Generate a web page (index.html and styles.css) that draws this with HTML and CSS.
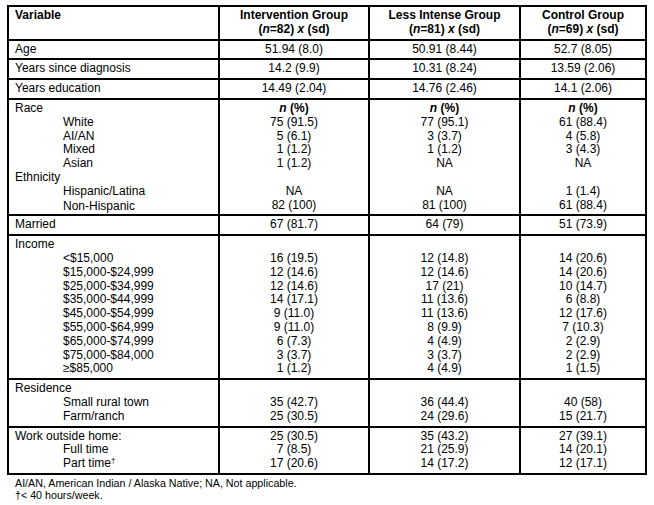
FILE: index.html
```html
<!DOCTYPE html>
<html>
<head>
<meta charset="utf-8">
<link rel="stylesheet" href="styles.css">
</head>
<body>
<table class="data">
  <colgroup>
    <col class="c1"><col class="c2"><col class="c3"><col class="c4">
  </colgroup>
  <thead>
    <tr>
      <th class="lbl">Variable</th>
      <th>Intervention Group<br>(<i>n</i>=82) <i>x</i> (sd)</th>
      <th>Less Intense Group<br>(<i>n</i>=81) <i>x</i> (sd)</th>
      <th>Control Group<br>(<i>n</i>=69) <i>x</i> (sd)</th>
    </tr>
  </thead>
  <tbody>
    <tr><td class="lbl">Age</td><td>51.94 (8.0)</td><td>50.91 (8.44)</td><td>52.7 (8.05)</td></tr>
    <tr><td class="lbl">Years since diagnosis</td><td>14.2 (9.9)</td><td>10.31 (8.24)</td><td>13.59 (2.06)</td></tr>
    <tr><td class="lbl">Years education</td><td>14.49 (2.04)</td><td>14.76 (2.46)</td><td>14.1 (2.06)</td></tr>
    <tr>
      <td class="lbl">
        <div>Race</div>
        <div class="sub">White</div>
        <div class="sub">AI/AN</div>
        <div class="sub">Mixed</div>
        <div class="sub">Asian</div>
        <div>Ethnicity</div>
        <div class="sub">Hispanic/Latina</div>
        <div class="sub last">Non-Hispanic</div>
      </td>
      <td>
        <div class="head"><i>n</i> (%)</div>
        <div>75 (91.5)</div><div>5 (6.1)</div><div>1 (1.2)</div><div>1 (1.2)</div>
        <div>&nbsp;</div><div>NA</div><div>82 (100)</div>
      </td>
      <td>
        <div class="head"><i>n</i> (%)</div>
        <div>77 (95.1)</div><div>3 (3.7)</div><div>1 (1.2)</div><div>NA</div>
        <div>&nbsp;</div><div>NA</div><div>81 (100)</div>
      </td>
      <td>
        <div class="head"><i>n</i> (%)</div>
        <div>61 (88.4)</div><div>4 (5.8)</div><div>3 (4.3)</div><div>NA</div>
        <div>&nbsp;</div><div>1 (1.4)</div><div>61 (88.4)</div>
      </td>
    </tr>
    <tr><td class="lbl">Married</td><td>67 (81.7)</td><td>64 (79)</td><td>51 (73.9)</td></tr>
    <tr>
      <td class="lbl">
        <div>Income</div>
        <div class="sub">&lt;$15,000</div>
        <div class="sub">$15,000-$24,999</div>
        <div class="sub">$25,000-$34,999</div>
        <div class="sub">$35,000-$44,999</div>
        <div class="sub">$45,000-$54,999</div>
        <div class="sub">$55,000-$64,999</div>
        <div class="sub">$65,000-$74,999</div>
        <div class="sub">$75,000-$84,000</div>
        <div class="sub">≥$85,000</div>
      </td>
      <td>
        <div>&nbsp;</div><div>16 (19.5)</div><div>12 (14.6)</div><div>12 (14.6)</div><div>14 (17.1)</div>
        <div>9 (11.0)</div><div>9 (11.0)</div><div>6 (7.3)</div><div>3 (3.7)</div><div>1 (1.2)</div>
      </td>
      <td>
        <div>&nbsp;</div><div>12 (14.8)</div><div>12 (14.6)</div><div>17 (21)</div><div>11 (13.6)</div>
        <div>11 (13.6)</div><div>8 (9.9)</div><div>4 (4.9)</div><div>3 (3.7)</div><div>4 (4.9)</div>
      </td>
      <td>
        <div>&nbsp;</div><div>14 (20.6)</div><div>14 (20.6)</div><div>10 (14.7)</div><div>6 (8.8)</div>
        <div>12 (17.6)</div><div>7 (10.3)</div><div>2 (2.9)</div><div>2 (2.9)</div><div>1 (1.5)</div>
      </td>
    </tr>
    <tr>
      <td class="lbl">
        <div>Residence</div>
        <div class="sub">Small rural town</div>
        <div class="sub">Farm/ranch</div>
      </td>
      <td><div>&nbsp;</div><div>35 (42.7)</div><div>25 (30.5)</div></td>
      <td><div>&nbsp;</div><div>36 (44.4)</div><div>24 (29.6)</div></td>
      <td><div>&nbsp;</div><div>40 (58)</div><div>15 (21.7)</div></td>
    </tr>
    <tr>
      <td class="lbl">
        <div>Work outside home:</div>
        <div class="sub">Full time</div>
        <div class="sub">Part time<sup class="dag">†</sup></div>
      </td>
      <td><div>25 (30.5)</div><div>7 (8.5)</div><div>17 (20.6)</div></td>
      <td><div>35 (43.2)</div><div>21 (25.9)</div><div>14 (17.2)</div></td>
      <td><div>27 (39.1)</div><div>14 (20.1)</div><div>12 (17.1)</div></td>
    </tr>
  </tbody>
</table>
<div class="notes">
  <p>AI/AN, American Indian / Alaska Native; NA, Not applicable.</p>
  <p>†&lt; 40 hours/week.</p>
</div>
</body>
</html>
```

FILE: styles.css
```css
html, body {
  background: #fff;
}
body {
  margin: 0;
  padding: 5px 0 0 7px;
  font-family: "Liberation Sans", Arial, sans-serif;
  font-size: 12px;
  color: #000;
}
.data {
  border-collapse: collapse;
  table-layout: fixed;
  width: 640px;
}
.c1 { width: 211px; }
.c2 { width: 150px; }
.c3 { width: 151px; }
.c4 { width: 126px; }
.data th,
.data td {
  border: 2px solid #000;
  padding: 2px 6px;
  line-height: 13.8px;
  vertical-align: top;
  text-align: center;
  font-weight: normal;
}
.data th {
  font-weight: bold;
}
.data .lbl {
  text-align: left;
}
.sub {
  padding-left: 48px;
}
.last {
  margin-top: 1px;
  margin-bottom: -1px;
}
.head {
  font-weight: bold;
}
.dag {
  font-size: 8px;
  line-height: 0;
  vertical-align: 4px;
}
.notes {
  padding: 2px 0 0 8px;
  font-size: 10.7px;
  line-height: 12.5px;
}
.notes p {
  margin: 0;
}
```
